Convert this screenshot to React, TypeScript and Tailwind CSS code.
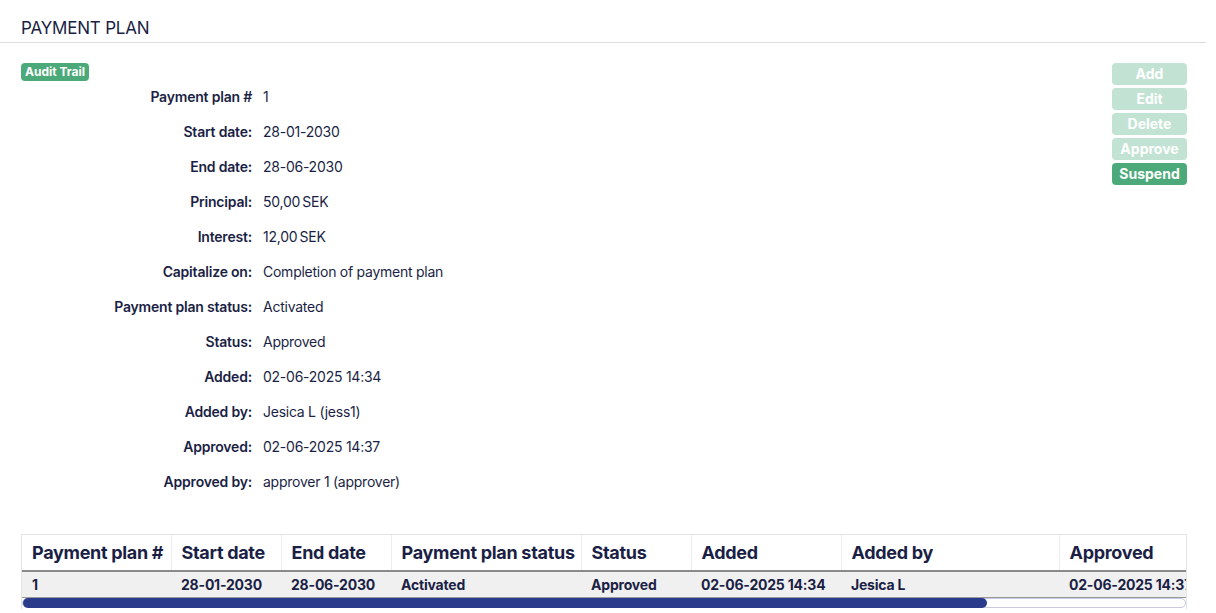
import React from "react";

const details: { label: string; value: string }[] = [
  { label: "Payment plan #", value: "1" },
  { label: "Start date:", value: "28-01-2030" },
  { label: "End date:", value: "28-06-2030" },
  { label: "Principal:", value: "50,00\u2009SEK" },
  { label: "Interest:", value: "12,00\u2009SEK" },
  { label: "Capitalize on:", value: "Completion of payment plan" },
  { label: "Payment plan status:", value: "Activated" },
  { label: "Status:", value: "Approved" },
  { label: "Added:", value: "02-06-2025 14:34" },
  { label: "Added by:", value: "Jesica L (jess1)" },
  { label: "Approved:", value: "02-06-2025 14:37" },
  { label: "Approved by:", value: "approver 1 (approver)" },
];

const columns = [
  { title: "Payment plan #", value: "1", width: "w-[149px]" },
  { title: "Start date", value: "28-01-2030", width: "w-[110px]" },
  { title: "End date", value: "28-06-2030", width: "w-[110px]" },
  { title: "Payment plan status", value: "Activated", width: "w-[190px]" },
  { title: "Status", value: "Approved", width: "w-[110px]" },
  { title: "Added", value: "02-06-2025 14:34", width: "w-[150px]" },
  { title: "Added by", value: "Jesica L", width: "w-[218px]" },
  { title: "Approved", value: "02-06-2025 14:37", width: "w-[160px]" },
  { title: "Approved by", value: "approver 1", width: "w-[160px]" },
];

const actions = [
  { name: "Add", enabled: false },
  { name: "Edit", enabled: false },
  { name: "Delete", enabled: false },
  { name: "Approve", enabled: false },
  { name: "Suspend", enabled: true },
];

export default function App() {
  return (
    <div className="w-[1216px] h-[613px] overflow-hidden bg-white text-[#1b1f45] font-['Inter','Noto_Sans',sans-serif]">
      <div className="w-[1206px]">
        <div className="h-[43px] border-b border-[#dedede] pl-[21px] pt-[17px]">
          <h1 className="text-[17px] leading-[22px] font-normal tracking-[-0.2px]">
            PAYMENT PLAN
          </h1>
        </div>

        <div className="pl-[21px] pr-[19px] pt-[15px] flex justify-between">
          <div>
            <button className="h-[18px] px-[4px] rounded-[4px] bg-[#4caa7a] text-white text-[12px] leading-[18px] font-bold">
              Audit Trail
            </button>
            <div className="mt-[5px] flex flex-col gap-[15px]">
              {details.map((d) => (
                <div key={d.label} className="flex h-5 items-center text-[14px] leading-5">
                  <span className="w-[242px] pr-[11px] text-right font-semibold tracking-[-0.2px]">
                    {d.label}
                  </span>
                  <span className="font-normal tracking-[-0.25px]">{d.value}</span>
                </div>
              ))}
            </div>
          </div>

          <div className="flex flex-col gap-[3px] w-[75px] mt-[5px]">
            {actions.map((a) => (
              <button
                key={a.name}
                className={`h-[22px] rounded-[4px] text-white text-[14px] font-bold leading-[22px] ${
                  a.enabled ? "bg-[#4caa7a]" : "bg-[#c2e3d3]"
                }`}
              >
                {a.name}
              </button>
            ))}
          </div>
        </div>

        <div className="ml-[21px] mt-[42px] w-[1166px] border border-[#e4e4e4] border-b-0">
          <div className="overflow-hidden">
            <table className="table-fixed w-[1357px] border-collapse text-left">
              <thead>
                <tr className="h-[36px] border-b-2 border-[#8a8a8a]">
                  {columns.map((c, i) => (
                    <th
                      key={c.title}
                      className={`${c.width} px-[10px] text-[18px] font-bold whitespace-nowrap tracking-[-0.3px] ${
                        i > 0 ? "border-l border-[#eeeeee]" : ""
                      }`}
                    >
                      {c.title}
                    </th>
                  ))}
                </tr>
              </thead>
              <tbody>
                <tr className="h-[26px] bg-[#f0f0f0] border-b border-[#9a9a9a]">
                  {columns.map((c) => (
                    <td
                      key={c.title}
                      className={`${c.width} px-[10px] text-[14px] font-bold whitespace-nowrap tracking-[-0.2px]`}
                    >
                      {c.value}
                    </td>
                  ))}
                </tr>
              </tbody>
            </table>
          </div>
          <div className="h-[11px] flex items-center">
            <div className="relative h-[10px] w-full rounded-full border border-[#c7cbe0] bg-white">
              <div className="absolute left-0 top-[-1px] h-[10px] w-[964px] rounded-full bg-[#2a3b8b]" />
            </div>
          </div>
        </div>
      </div>
    </div>
  );
}
